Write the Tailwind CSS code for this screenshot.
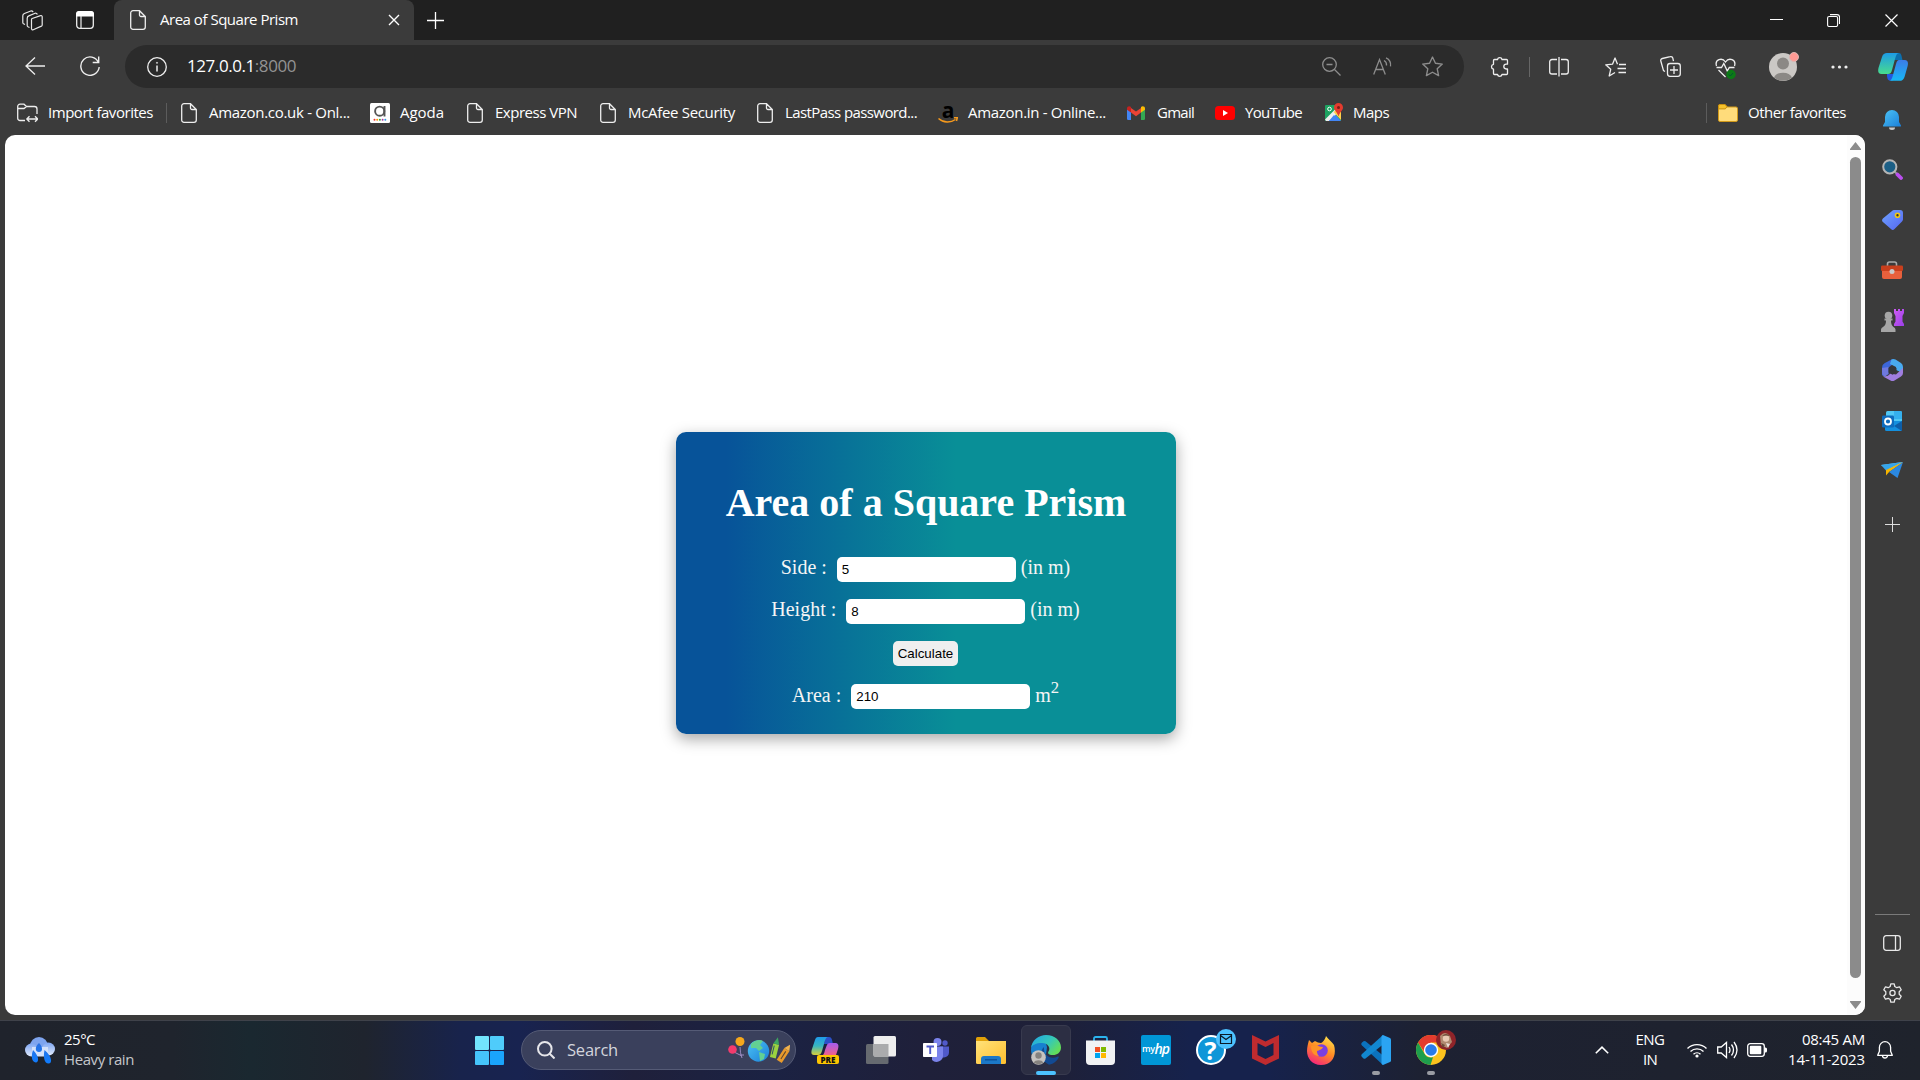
<!DOCTYPE html>
<html lang="en">
<head>
<meta charset="utf-8">
<title>Area of Square Prism</title>
<script src="https://cdn.jsdelivr.net/npm/@tailwindcss/browser@4"></script>
</head>
<body class="relative w-[1920px] h-[1080px] overflow-hidden flex flex-col bg-[#3b3b3b] text-white text-[15px] leading-5 font-['Open_Sans','Noto_Sans',sans-serif]">
<svg class="absolute w-0 h-0">
  <defs>
    <symbol id="doc" viewBox="0 0 16 20"><path d="M3 .7h6.500L15.300 6.500V17a2.300 2.300 0 0 1-2.300 2.300H3A2.300 2.300 0 0 1 .7 17V3A2.300 2.300 0 0 1 3 .7zM9.500 .9V5a1.500 1.500 0 0 0 1.500 1.500h4.100" fill="none" stroke="#eee" stroke-width="1.300"/></symbol>
    <linearGradient id="gBlue" x1="0" y1="0" x2="1" y2="1"><stop stop-color="#4cc3f5"/><stop offset="1" stop-color="#1b7fd8"/></linearGradient>
    <linearGradient id="gTeal" x1="0" y1="0" x2="0" y2="1"><stop stop-color="#1d9be6"/><stop offset="1" stop-color="#48dc8e"/></linearGradient>
    <linearGradient id="gPre" x1="0" y1="0" x2="0" y2="1"><stop stop-color="#1f9bea"/><stop offset=".5" stop-color="#38b6c0"/><stop offset="1" stop-color="#d8cf3a"/></linearGradient>
    <linearGradient id="gPink" x1="0" y1="0" x2="0" y2="1"><stop stop-color="#a45cf0"/><stop offset="1" stop-color="#f0608a"/></linearGradient>
    <linearGradient id="gCyan" x1="0" y1="0" x2="0" y2="1"><stop stop-color="#3c7be8"/><stop offset="1" stop-color="#17b8f5"/></linearGradient>
    <linearGradient id="gPurple" x1="0" y1="0" x2="1" y2="1"><stop stop-color="#d05cf5"/><stop offset="1" stop-color="#9a3fe6"/></linearGradient>
    <linearGradient id="gTag" x1="0" y1="0" x2="1" y2="1"><stop stop-color="#6fa3ff"/><stop offset="1" stop-color="#5566f0"/></linearGradient>
    <linearGradient id="gWin" x1="0" y1="0" x2="1" y2="1"><stop stop-color="#7df0ff"/><stop offset="1" stop-color="#0a9bff"/></linearGradient>
    <linearGradient id="gCloud" x1="0" y1="0" x2="0" y2="1"><stop stop-color="#7ea6f2"/><stop offset="1" stop-color="#dfe9fb"/></linearGradient>
    <linearGradient id="gDrop" x1="0" y1="0" x2="0" y2="1"><stop stop-color="#2a6fe0"/><stop offset="1" stop-color="#0f7dff"/></linearGradient>
    <linearGradient id="gFold" x1="0" y1="0" x2="1" y2="1"><stop stop-color="#ffe27a"/><stop offset="1" stop-color="#ffbf2e"/></linearGradient>
    <linearGradient id="gEdge" x1="0" y1="0" x2="1" y2=".6"><stop stop-color="#1fa4e8"/><stop offset=".6" stop-color="#35c8b8"/><stop offset="1" stop-color="#62dd5a"/></linearGradient>
    <linearGradient id="gFox" x1=".8" y1="0" x2=".3" y2="1"><stop stop-color="#ffe24a"/><stop offset=".5" stop-color="#ff8a24"/><stop offset="1" stop-color="#f5247c"/></linearGradient>
  </defs>
</svg>

<!-- Tab strip -->
<header class="h-10 shrink-0 flex items-center bg-[#202020]">
  <div class="w-[114px] h-10 flex items-center pl-[22px] gap-[33px]">
    <svg class="w-[21px] h-[21px]" viewBox="0 0 21 21" fill="none" stroke="#e8e8e8" stroke-width="1.200" stroke-linejoin="round"><path d="M9.500 9.500Q9.500 8.800 10.200 8.500L18.500 5.600a1.200 1.200 0 0 1 1.700 1.100v8.200q0 .8-.8 1.200L11.200 19.700a1.200 1.200 0 0 1-1.700-1z"/><path d="M7.500 17.500 6 16.800Q5.200 16.400 5.200 15.500V8.200a2.500 2.500 0 0 1 1.600-2.300l6.300-2.600a1.700 1.700 0 0 1 2.200 1.200M3 14.500 1.500 13.800Q.8 13.300 .8 12.500V5.800a2.500 2.500 0 0 1 1.600-2.300L8.800 1a1.700 1.700 0 0 1 2.200 1.200"/></svg>
    <svg class="w-[18px] h-[18px]" viewBox="0 0 18 18"><rect x=".7" y=".7" width="16.600" height="16.600" rx="3" fill="none" stroke="#eee" stroke-width="1.300"/><path d="M3 0h12a3 3 0 0 1 3 3v2.500H0V3a3 3 0 0 1 3-3z" fill="#fff"/><path d="M5 5v12" stroke="#eee" stroke-width="1.200"/></svg>
  </div>
  <div class="w-[300px] h-10 flex items-center bg-[#3b3b3b] rounded-t-lg pl-4 pr-[14px]">
    <svg class="w-4 h-5"><use href="#doc"/></svg>
    <span class="ml-[14px] pb-0.5 whitespace-nowrap" data-w="138">Area of Square Prism</span>
    <svg class="ml-auto w-3 h-3" viewBox="0 0 12 12" stroke="#fff" stroke-width="1.400"><path d="m1 1 10 10M11 1 1 11"/></svg>
  </div>
  <svg class="ml-[13px] w-[17px] h-[17px]" viewBox="0 0 17 17" stroke="#fff" stroke-width="1.300"><path d="M8.500 0v17M0 8.500h17"/></svg>
  <div class="ml-auto flex items-center">
    <div class="w-[57px] flex justify-center"><svg class="w-[13px] h-[13px]" viewBox="0 0 13 13"><path d="M0 5.500h13" stroke="#fff"/></svg></div>
    <div class="w-[57px] flex justify-center"><svg class="w-[13px] h-[13px]" viewBox="0 0 13 13" fill="none" stroke="#fff" stroke-width="1.100"><rect x=".6" y="2.500" width="10" height="10" rx="1.500"/><path d="M3 .6h7a2.500 2.500 0 0 1 2.500 2.500V10"/></svg></div>
    <div class="w-[58px] flex justify-center"><svg class="w-[13px] h-[13px]" viewBox="0 0 13 13" stroke="#fff" stroke-width="1.200"><path d="m.5.5 12 12M12.500.5l-12 12"/></svg></div>
  </div>
</header>

<!-- Toolbar -->
<nav class="h-12 pt-[5px] shrink-0 flex items-center">
  <svg class="ml-[25px] w-5 h-5 mb-px" viewBox="0 0 20 20" fill="none" stroke="#eee" stroke-width="1.300"><path d="M20 10H1M10 1.500 1 10l9 8.500"/></svg>
  <svg class="ml-[35px] w-5 h-5 mb-px" viewBox="0 0 20 20" fill="none" stroke="#eee" stroke-width="1.400"><path d="M18.500 6.500A9.200 9.200 0 1 0 19.200 11M18.700 .5v6h-6"/></svg>
  <div class="ml-[25px] w-[1339px] h-[43px] rounded-full bg-[#2b2b2b] flex items-center pl-[22px] pr-[21px]">
    <svg class="w-5 h-5" viewBox="0 0 20 20" fill="none" stroke="#eee" stroke-width="1.300"><circle cx="10" cy="10" r="9.300"/><path d="M10 8.500v6" stroke-width="1.500"/><circle cx="10" cy="5.800" r=".6" fill="#eee" stroke-width=".6"/></svg>
    <span class="ml-5 pb-0.5 text-[17px] whitespace-nowrap" data-w="109">127.0.0.1<span class="text-[#939393]">:8000</span></span>
    <div class="ml-auto flex items-center text-[#8d8d8d]" >
      <svg class="w-[19px] h-[19px]" viewBox="0 0 19 19" fill="none" stroke="currentColor" stroke-width="1.300"><circle cx="7.500" cy="7.500" r="6.800"/><path d="M4.500 7.500h6M12.500 12.500l6 6"/></svg>
      <svg class="ml-8 w-5 h-[19px]" viewBox="0 0 20 19" fill="none" stroke="currentColor" stroke-width="1.300"><path d="M.7 17.500 6.500 2.500l5.800 15M2.800 12.500h7.500M11 3.500a5 5 0 0 1 2.500 5M13 .8a8 8 0 0 1 4.500 8.500" /></svg>
      <svg class="ml-[29px] w-[21px] h-[21px]" viewBox="0 0 20 20" fill="none" stroke="currentColor" stroke-width="1.300" stroke-linejoin="round"><path d="m10 1 2.800 5.900 6.500.8-4.800 4.500 1.300 6.500-5.800-3.200-5.800 3.200 1.300-6.500L.7 7.700l6.500-.8z"/></svg>
    </div>
  </div>
  <div class="ml-[26px] flex items-center">
    <svg class="w-5 h-5" viewBox="0 0 20 20" fill="none" stroke="#eee" stroke-width="1.300" stroke-linejoin="round"><path d="M4.500 2.500h3a2.300 2.300 0 0 1 4.500 0h4.500a1 1 0 0 1 1 1v3.700h-1.300a2.400 2.400 0 0 0 0 4.800h1.300v4.500a1 1 0 0 1-1 1H12a2.300 2.300 0 0 1-4.500 0h-3a1 1 0 0 1-1-1V12.200a2.500 2.500 0 0 1 0-4.900V3.500a1 1 0 0 1 1-1z"/></svg>
    <div class="ml-[19px] w-px h-5 bg-[#666]"></div>
    <svg class="ml-[19px] w-5 h-5" viewBox="0 0 20 20" fill="none" stroke="#eee" stroke-width="1.300"><path d="M8 2.500H3A2.300 2.300 0 0 0 .7 4.800v9.900A2.300 2.300 0 0 0 3 17h5M12 2.500h5a2.300 2.300 0 0 1 2.300 2.300v9.900A2.300 2.300 0 0 1 17 17h-5M10 0v19.500"/></svg>
    <svg class="ml-9 w-[21px] h-5" viewBox="0 0 21 20" fill="none" stroke="#eee" stroke-width="1.300" stroke-linejoin="round"><path d="M12.500 7.300 10 1 7.500 7.200l-6.800.6 5 4.500-1.500 6.700 5.800-3.500M14 7.500h7M12.500 11.500H21M13.500 15.500H21"/></svg>
    <svg class="ml-[34px] w-[21px] h-[21px]" viewBox="0 0 21 21" fill="none" stroke="#eee" stroke-width="1.300"><rect x="7.500" y="7.500" width="12.800" height="12.800" rx="2.500"/><path d="M14 10v8M10 14h8M5 15.500 3.500 14.600 .8 5a2 2 0 0 1 1.500-2.500l8-1.800a2 2 0 0 1 2.500 1.500l.7 3"/></svg>
    <svg class="ml-[34px] w-[22px] h-[22px] mt-1" viewBox="0 0 22 22" fill="none" stroke="#eee" stroke-width="1.300"><path d="M1.500 8C-.5 1.500 7-1 10.500 4 14-1 21.500 1.500 19.500 8M1.500 9.500h5l2.300-4 3.500 7.500 2-3.500h5.200M3.500 12l7 7"/><circle cx="16" cy="16.500" r="4.700" fill="#0c7a16" stroke="none"/><path d="m13.800 16.500 1.500 1.500 2.700-3" stroke="#053" stroke-width="1"/></svg>
    <div class="relative ml-8 w-7 h-7 rounded-full bg-[#cbc8c5]">
      <svg class="w-7 h-7" viewBox="0 0 28 28"><circle cx="14" cy="10.500" r="6" fill="#8b8885"/><path d="M5 24.500a9.500 7 0 0 1 18 0 14 14 0 0 1-18 0z" fill="#8b8885"/></svg>
      <span class="absolute -top-[1px] right-[-2px] w-[10px] h-[10px] rounded-full bg-[#ff9a94] border border-[#d9b6b3]"></span>
    </div>
    <svg class="ml-[34px] w-[17px] h-1" viewBox="0 0 17 4" fill="#eee"><circle cx="2" cy="2" r="1.600"/><circle cx="8.500" cy="2" r="1.600"/><circle cx="15" cy="2" r="1.600"/></svg>
    <svg class="ml-[30px] w-[30px] h-7" viewBox="0 0 30 28"><path d="M9 21h9l-3 6.500h-3C9.500 27.500 9 25 9 21z" fill="#2358e0"/><path d="M17 0h4c2.500 0 2.500 3 3.500 7h-8z" fill="#0c6fae"/><path d="M9 0h12c-2 0-3 2-4 6l-3 11c-.8 3-2 4-4 4H3.500C0 21-.3 18 .6 14.500L4 4c1-3 2.500-4 5-4z" fill="url(#gTeal)"/><path d="M21 7h5.500c3.500 0 4 2.500 3 6.500L26.500 24c-1 3-2.500 3.800-5 3.800H11c2 0 2.800-1.500 3.800-5L18 11c1-3 1.500-4 3-4z" fill="url(#gCyan)"/></svg>
  </div>
</nav>

<div class="flex h-[932px] shrink-0">
  <div class="w-[1865px] flex flex-col">
    <!-- Favourites bar -->
    <div class="h-[47px] pt-[2px] flex items-center whitespace-nowrap">
      <div class="w-[149px] ml-[17px] flex items-center gap-[10px]">
        <svg class="w-[21px] h-5 shrink-0" viewBox="0 0 21 20" fill="none" stroke="#eee" stroke-width="1.300"><path d="M8 17.500H3A2.300 2.300 0 0 1 .7 15.200V3.500A2.300 2.300 0 0 1 3 1.200h4l2.500 2.300h8A2.500 2.500 0 0 1 20 6v5M.7 5.500H7l2.500-2M10 16h10.500M12.500 13.200 9.800 16l2.700 2.800M18 13.200l2.700 2.800-2.700 2.800"/></svg>
        <span class="pb-0.5" data-w="105">Import favorites</span>
      </div>
      <div class="w-px h-5 bg-[#5c5c5c]"></div>
      <div class="w-[189px] ml-[14px] flex items-center gap-3"><svg class="w-4 h-5 shrink-0"><use href="#doc"/></svg><span class="pb-0.5" data-w="141">Amazon.co.uk - Onl...</span></div>
      <div class="w-[97px] flex items-center gap-[10px]">
        <svg class="w-5 h-5" viewBox="0 0 20 20"><rect width="20" height="20" rx="1.500" fill="#fff"/><circle cx="9.700" cy="8.200" r="4.600" fill="none" stroke="#555" stroke-width="1.900"/><path d="M14.500 3v10.500" stroke="#555" stroke-width="1.900"/><circle cx="4.500" cy="16.700" r="1" fill="#e33"/><circle cx="7.200" cy="16.700" r="1" fill="#f90"/><circle cx="9.900" cy="16.700" r="1" fill="#3a3"/><circle cx="12.600" cy="16.700" r="1" fill="#a3a"/><circle cx="15.300" cy="16.700" r="1" fill="#39d"/></svg>
        <span class="pb-0.5" data-w="44">Agoda</span></div>
      <div class="w-[133px] flex items-center gap-3"><svg class="w-4 h-5 shrink-0"><use href="#doc"/></svg><span class="pb-0.5" data-w="82">Express VPN</span></div>
      <div class="w-[157px] flex items-center gap-3"><svg class="w-4 h-5 shrink-0"><use href="#doc"/></svg><span class="pb-0.5" data-w="107">McAfee Security</span></div>
      <div class="w-[181px] flex items-center gap-3"><svg class="w-4 h-5 shrink-0"><use href="#doc"/></svg><span class="pb-0.5" data-w="132">LastPass password...</span></div>
      <div class="w-[189px] flex items-center gap-[10px]">
        <span class="relative w-5 h-5 shrink-0 flex justify-center text-black font-bold text-[21px] leading-[14px] font-['Open_Sans']">a<svg class="absolute left-0 bottom-0 w-5 h-[6px]" viewBox="0 0 20 6" fill="none" stroke="#f79a1c" stroke-width="1.500"><path d="M.5 1.500c5 4.500 12 4.500 17 1M16 .8h3.300L18.500 4"/></svg></span>
        <span class="pb-0.5" data-w="138">Amazon.in - Online...</span></div>
      <div class="w-[88px] flex items-center gap-3">
        <svg class="w-[18px] h-[14px]" viewBox="0 0 18 14"><path d="M0 2.500 4 5v9H1.200A1.200 1.200 0 0 1 0 12.800z" fill="#4285f4"/><path d="M18 2.500 14 5v9h2.800a1.200 1.200 0 0 0 1.200-1.200z" fill="#34a853"/><path d="M4 2v4.500l5 3.700 5-3.700V2L9 5.600z" fill="#ea4335"/><path d="M0 2.500C0 .5 2.200-.5 4 .9v5.600L0 3.700z" fill="#c5221f"/><path d="M18 2.500C18 .5 15.800-.5 14 .9v5.600l4-2.800z" fill="#fbbc04"/></svg>
        <span class="pb-0.5" data-w="37">Gmail</span></div>
      <div class="w-[110px] flex items-center gap-[10px]">
        <svg class="w-5 h-[14px]" viewBox="0 0 20 14"><rect width="20" height="14" rx="3.500" fill="#f00"/><path d="m8 4 5 3-5 3z" fill="#fff"/></svg>
        <span class="pb-0.5" data-w="57">YouTube</span></div>
      <div class="w-[80px] flex items-center gap-[10px]">
        <svg class="w-[18px] h-[19px] shrink-0" viewBox="0 0 18 19"><rect y="2" width="16" height="16" rx="1" fill="#1da261"/><path d="m1 18 8-8 7 8z" fill="#4285f4"/><path d="m0 16.500 10-10 3 3-9 8.500H1z" fill="#eee"/><path d="m8.500 9 7.500 8V9l-3-3z" fill="#ffd04b"/><path d="M4 18 9 12l5 6z" fill="#4285f4"/><circle cx="4.500" cy="6" r="1.800" fill="none" stroke="#fff"/><path d="M13.500 0A4.500 4.500 0 0 1 18 4.500c0 3-3 4-4.500 9-1.500-5-4.500-6-4.500-9A4.500 4.500 0 0 1 13.500 0z" fill="#e33b2e"/><circle cx="13.500" cy="4.500" r="1.500" fill="#7b1d16"/></svg>
        <span class="pb-0.5" data-w="36">Maps</span></div>
      <div class="ml-auto flex items-center w-[159px]">
        <div class="w-px h-5 bg-[#5c5c5c]"></div>
        <svg class="ml-[11px] w-5 h-[18px]" viewBox="0 0 20 18"><path d="M.5 2A1.500 1.500 0 0 1 2 .5h5L9 3h9a1.500 1.500 0 0 1 1.500 1.500v11.500A1.500 1.500 0 0 1 18 17.500H2A1.500 1.500 0 0 1 .5 16z" fill="#ffdc7b" stroke="#d29a1a"/><path d="M.5 2A1.500 1.500 0 0 1 2 .5h5L9 2.700 7.300 4.900H.5z" fill="#f5c22c" stroke="#c98f0f"/></svg>
        <span class="ml-[10px] pb-0.5" data-w="98">Other favorites</span>
      </div>
    </div>

    <!-- Page viewport -->
    <main class="ml-[5px] h-[880px] bg-white rounded-[10px] flex overflow-hidden">
      <div class="w-[1842px] flex justify-center pt-[297px]">
        <form class="w-[500px] h-[302px] rounded-[10px] bg-[linear-gradient(90deg,#075399_10%,#098f97_56%)] shadow-[0_5px_15px_rgba(0,0,0,0.35)] flex flex-col items-center pt-[48px] text-[20px] leading-[25px] text-[whitesmoke] font-['Liberation_Serif',serif]">
          <h1 class="h-[77px] text-[40px] leading-[46px] font-bold text-white whitespace-nowrap">Area of a Square Prism</h1>
          <div class="flex h-[25px] mb-[17px] mr-px"><label class="mr-[10px] -mt-[2px]">Side :</label><input class="w-[179px] h-[25px] px-[5px] rounded-[5px] bg-white text-black text-[13.333px] font-['Liberation_Sans',sans-serif]" value="5"><span class="ml-[5px] -mt-[2px]">(in m)</span></div>
          <div class="flex h-[25px] mb-[17px] mr-px"><label class="mr-[10px] -mt-[2px]">Height :</label><input class="w-[179px] h-[25px] px-[5px] rounded-[5px] bg-white text-black text-[13.333px] font-['Liberation_Sans',sans-serif]" value="8"><span class="ml-[5px] -mt-[2px]">(in m)</span></div>
          <button type="button" class="w-[65px] h-[25px] mb-[18px] mr-px rounded-[5px] bg-[#efefef] text-black text-[13.333px] leading-[25px] font-['Liberation_Sans',sans-serif]">Calculate</button>
          <div class="flex h-[25px] mr-px"><label class="mr-[10px] -mt-px">Area :</label><input class="w-[179px] h-[25px] px-[5px] rounded-[5px] bg-white text-black text-[13.333px] font-['Liberation_Sans',sans-serif]" value="210"><span class="ml-[5px] -mt-px">m</span><span class="-mt-[9px] text-[16.667px]">2</span></div>
        </form>
      </div>
      <div class="w-[16px] bg-[#fcfcfc] flex flex-col items-center pt-[7px]">
        <svg class="w-[11px] h-2" viewBox="0 0 11 8"><path d="M5.500 0 11 7a.6.6 0 0 1-.5 1H.5A.6.6 0 0 1 0 7z" fill="#8b8b8b"/></svg>
        <div class="mt-[7px] w-[11px] h-[821px] rounded-full bg-[#8b8b8b]"></div>
        <svg class="mt-[23px] w-[11px] h-2" viewBox="0 0 11 8"><path d="M5.500 8 11 1a.6.6 0 0 0-.5-1H.5A.6.6 0 0 0 0 1z" fill="#8b8b8b"/></svg>
      </div>
      <div class="w-[2px] bg-[#fcfcfc]"></div>
    </main>
  </div>

  <!-- Sidebar -->
  <aside class="w-[54px] pt-[7px] flex flex-col items-center">
    <div class="h-[50px] flex items-center"><svg class="w-[18px] h-5" viewBox="0 0 18 20"><path d="M6 17.500h6a3 2.500 0 0 1-6 0z" fill="#c9c9c9"/><path d="M9 0a7 7 0 0 1 7 7v5l2 3.500a.7.7 0 0 1-.6 1H.6a.7.7 0 0 1-.6-1L2 12V7a7 7 0 0 1 7-7z" fill="url(#gBlue)"/></svg></div>
    <div class="h-[50px] flex items-center pb-0.5"><svg class="w-[21px] h-[21px]" viewBox="0 0 21 21"><path d="m12 12 3.500 3.500" stroke="#999" stroke-width="2"/><path d="m15.500 15.500 3.500 3.500" stroke="#bb4ff0" stroke-width="3.800" stroke-linecap="round"/><circle cx="7.800" cy="7.800" r="6.600" fill="#1c5f86" stroke="#b5b5b5" stroke-width="2"/></svg></div>
    <div class="h-[50px] flex items-center"><svg class="w-[21px] h-5" viewBox="0 0 21 20"><path d="M12.500 0H18a3 3 0 0 1 3 3v6.500a3 3 0 0 1-1 2l-7.500 7.600a2.500 2.500 0 0 1-3.500 0L.9 12a2.500 2.500 0 0 1 0-3.500L10 .9A3.500 3.500 0 0 1 12.500 0z" fill="url(#gTag)"/><circle cx="15.500" cy="5.300" r="2" fill="#333" stroke="#f2c811" stroke-width="1.600"/></svg></div>
    <div class="h-[50px] flex items-center"><svg class="w-[22px] h-[18px]" viewBox="0 0 22 18"><path d="M6.500 5V3A2 2 0 0 1 8.500 1h5a2 2 0 0 1 2 2v2" fill="none" stroke="#aaa" stroke-width="1.600"/><path d="M1 8h20v8a2 2 0 0 1-2 2H3a2 2 0 0 1-2-2z" fill="#e8603c"/><rect y="4.500" width="22" height="5.500" rx="1.200" fill="#c93f1d"/><circle cx="11" cy="10.500" r="2.500" fill="#c9c9c9"/></svg></div>
    <div class="h-[50px] flex items-center"><svg class="w-[23px] h-[23px]" viewBox="0 0 23 23"><path d="M13 0h2v2h2V0h2v2h2V0h2v4l-1.500 3v5.500L23 15v2H13v-2l1.500-2.500V7L13 4z" fill="url(#gPurple)"/><circle cx="7.500" cy="6.500" r="3.800" fill="#a6a6a6"/><path d="M3.500 9.500h8v2H10c0 3 .5 5 2.500 6.500a3 3 0 0 1 2 2.500V23H0v-2.500a3 3 0 0 1 2-2.500c2.500-1.500 3-3.500 3-6.500H3.500z" fill="#a6a6a6"/></svg></div>
    <div class="h-[50px] flex items-center"><svg class="w-[21px] h-[22px]" viewBox="0 0 21 22"><path d="M10.500 0 2.500 4.300Q0 5.800 0 8.500v8l6.500-1V8.500L13 3.500z" fill="#3c66d8"/><path d="M9.500 .5q2-1 4 0L19 4q2 1.500 2 4v6L14 11V8L8 5z" fill="#49aaf0"/><path d="m21 9v5q0 2.300-2 3.500l-6.500 4q-2 1-4 0L1 17.500q6 0 7-3l6 1z" fill="#a07ee0"/><path d="M6.500 8v6.500L3 18q-3-1.500-3-5V9z" fill="#6f78e0"/><path d="M10.500 6.500 14.500 9v4.500l-4 2.300-4-2.300V9z" fill="#35363b"/></svg></div>
    <div class="h-[50px] flex items-center pt-0.5"><svg class="w-5 h-5" viewBox="0 0 20 20"><rect x="4" width="16" height="15" rx="1.500" fill="#50c8f5"/><path d="M12 0h6.500A1.500 1.500 0 0 1 20 1.500V8h-8z" fill="#35b0ee"/><path d="M3 10h17v8.500a1.500 1.500 0 0 1-1.500 1.500h-14A1.500 1.500 0 0 1 3 18.500z" fill="#1490df"/><path d="m20 10-8 5 8 5z" fill="#0e5ea8"/><rect y="4.500" width="12" height="12" rx="1.200" fill="#0f6cbd"/><circle cx="6" cy="10.500" r="3" fill="none" stroke="#fff" stroke-width="1.800"/></svg></div>
    <div class="h-[50px] flex items-center"><svg class="w-[22px] h-[16px]" viewBox="0 0 22 16"><path d="M0 3 22 0 9 9z" fill="#6fc8f7"/><path d="M0 3 21.500 0 5 8.500z" fill="#36a5ea"/><path d="M22 0 16.500 16 8 10z" fill="#2b88e0"/><path d="M22 0 5 8v5.500l3.500-4z" fill="#f7b500"/></svg></div>
    <div class="h-[58px] flex items-center"><svg class="w-[15px] h-[15px]" viewBox="0 0 15 15" stroke="#ddd"><path d="M7.500 0v15M0 7.500h15"/></svg></div>
    <div class="mt-auto w-[35px] h-px bg-[#7a7a7a]"></div>
    <svg class="mt-5 w-[18px] h-4" viewBox="0 0 18 16" fill="none" stroke="#e8e8e8" stroke-width="1.300"><rect x=".7" y=".7" width="16.600" height="14.600" rx="2.500"/><path d="M12.500 1v14"/></svg>
    <svg class="mt-8 mb-4 w-[21px] h-[21px]" viewBox="0 0 21 21" fill="none" stroke="#e8e8e8" stroke-width="1.300" stroke-linejoin="round"><path d="M8.800.8h3.400l.6 2.700 2 1.200 2.700-.9 1.700 3-2 1.900v2.600l2 1.900-1.700 3-2.700-.9-2 1.200-.6 2.700H8.800l-.6-2.700-2-1.200-2.700.9-1.700-3 2-1.900V8.700l-2-1.900 1.700-3 2.700.9 2-1.200z"/><circle cx="10.500" cy="10" r="2.600"/></svg>
  </aside>
</div>
<div class="h-px shrink-0 bg-[#3f424a]"></div>

<!-- Taskbar -->
<footer class="h-[59px] pb-px shrink-0 flex items-center bg-[linear-gradient(90deg,#1f232c_0%,#1f242d_9%,#1a2830_13%,#1f242e_19%,#18234c_24%,#182350_27%,#1f203b_33%,#1b2243_40%,#1f203a_48%,#1e2038_55%,#16224c_62%,#16224c_66%,#1d2132_74%,#1f232c_100%)]">
  <svg class="ml-[25px] w-[30px] h-[27px] shrink-0" viewBox="0 0 30 27"><circle cx="14" cy="9" r="9" fill="#7ea4ee"/><circle cx="6.500" cy="13" r="6.500" fill="url(#gCloud)"/><circle cx="23.500" cy="12" r="6.500" fill="url(#gCloud)"/><path d="M7 10h16v9.500H7z" fill="#d4e1fa"/><path d="M14 6c4 4 4 9 0 9s-4.500-5 0-9zM8 13c7 7 5.500 12.500 3 12.500S5 22 8 13zM19.500 13c8 7 8 13.500 4 13.500s-5.500-6-4-13.500z" fill="url(#gDrop)"/></svg>
  <div class="ml-[9px] w-[411px] pb-[3px] flex flex-col items-start whitespace-nowrap"><span data-w="31">25°C</span><span class="text-[#c4c6ca]" data-w="70">Heavy rain</span></div>
  <svg class="w-[29px] h-[29px]" viewBox="0 0 29 29"><rect width="14" height="14" rx="1" fill="#72e4fd"/><rect x="15" width="14" height="14" rx="1" fill="#4fccfb"/><rect y="15" width="14" height="14" rx="1" fill="#45c4fb"/><rect x="15" y="15" width="14" height="14" rx="1" fill="#1aa4fc"/></svg>
  <div class="ml-[17px] w-[275px] h-10 rounded-full bg-[#3a405c] border border-[#555b76] flex items-center pl-[15px] pr-[5px]">
    <svg class="w-[18px] h-[18px]" viewBox="0 0 18 18" fill="none" stroke="#e6e6ea" stroke-width="2"><circle cx="7.800" cy="7.800" r="6.800"/><path d="m12.500 12.500 5 5"/></svg>
    <span class="ml-3 text-[16.500px] text-[#d3d5dc]" data-w="51">Search</span>
    <svg class="ml-auto w-[62px] h-[27px]" viewBox="0 0 62 27"><path d="M6 15q4 2 8 4M12 10q0 6 2 11M12 18l4 0" stroke="#9b8ac0" fill="none"/><circle cx="12" cy="4.500" r="4.500" fill="#f5a81c"/><circle cx="4.500" cy="12.500" r="4.300" fill="#f33b6d"/><circle cx="30.500" cy="14" r="10.700" fill="url(#gBlue)"/><path d="M23 7c4-4 9-5 12-3l-3 4 3 3-4 3-3-3-5 0zM31 15l6 2-1 5-4 2z" fill="#63d093"/><g transform="rotate(14 47 12)"><rect x="44" y="7" width="6" height="14" fill="#9bd340"/><path d="m44 7 3-7 3 7z" fill="#3da660"/><path d="M45.500 9v9" stroke="#31506a"/></g><g transform="rotate(33 56 18)"><rect x="52.500" y="12" width="6" height="14" fill="#e89a2c"/><path d="m52.500 12 3-6 3 6z" fill="#f2b34e"/><path d="M55.500 14v9" stroke="#5a452e"/></g></svg>
  </div>
  <div class="flex h-[59px] items-center ml-[2px]">
    <div class="w-[55px] flex justify-center"><svg class="w-[29px] h-[29px]" viewBox="0 0 29 29"><path d="M14 1h4c3 0 3 3 4 7h-9z" fill="#2b50c8"/><path d="M7 1h10c-2 0-3 3-4 7l-2 7c-1 3-2 4-4 4H3c-3 0-3-3-2-6L4 4c.6-2 1.500-3 3-3z" fill="url(#gPre)"/><path d="M19 7h5c3.500 0 4 2.500 3 6l-2 6H12c1-1 1.500-3 2-5l1.500-4c.8-2 1.500-3 3.500-3z" fill="url(#gPink)"/><rect x="6" y="19" width="22" height="9" rx="2" fill="#fdc500"/><text x="17" y="26.500" text-anchor="middle" font-size="8" font-weight="800" font-family="Open Sans" fill="#111">PRE</text></svg></div>
    <div class="w-[55px] flex justify-center"><svg class="w-[30px] h-[28px]" viewBox="0 0 30 28"><rect y="8" width="22.500" height="20" rx="1.500" fill="#666a70"/><rect x="7.500" width="22.500" height="20.500" rx="1.500" fill="#eee"/><path d="M7.500 8h15v12.500H9a1.500 1.500 0 0 1-1.500-1.500z" fill="#aaabad"/></svg></div>
    <div class="w-[55px] flex justify-center"><svg class="w-[26px] h-6" viewBox="0 0 26 24"><circle cx="22" cy="5" r="2.700" fill="#5059c9"/><circle cx="14.500" cy="4" r="4" fill="#7b83eb"/><path d="M17 8.500h9v6a5 5 0 0 1-5 5h-4z" fill="#5059c9"/><path d="M9 8.500h11V17a6.500 6.500 0 0 1-11 5z" fill="#7b83eb"/><rect y="5" width="14" height="14" rx=".8" fill="#fff"/><path d="M3.500 8.500h7.500M7.200 8.500V16" stroke="#5059c9" stroke-width="1.900"/></svg></div>
    <div class="w-[55px] flex justify-center"><svg class="w-[30px] h-[27px]" viewBox="0 0 30 27"><path d="M0 1.500A1.500 1.500 0 0 1 1.500 0H9l4 4v5H0z" fill="#e0a008"/><path d="M0 4h30v21.500a1.500 1.500 0 0 1-1.500 1.500h-27A1.500 1.500 0 0 1 0 25.500z" fill="url(#gFold)"/><path d="M5 27v-5a3 3 0 0 1 3-3h14a3 3 0 0 1 3 3v5z" fill="#1c78c8"/><path d="M9 22.800h12" stroke="#0b4f96" stroke-width="1.300"/></svg></div>
    <div class="relative w-[55px] h-[59px] flex items-center justify-center">
      <div class="w-[50px] h-[50px] rounded-md bg-[#2c2e43] border border-[#383a4e] flex items-center justify-center">
      <svg class="w-[30px] h-[30px]" viewBox="0 0 30 30"><path d="M0 15C0 6 7 2 14 5l2 7-2 15C6 28 0 22 0 15z" fill="#1780cf"/><path d="M0 13C1 5 8 0 15 0c9 0 15 6 15 12.500 0 5-4 7.500-8 7.500-5 0-5.500-2-4.500-3.500C20 13 17 8 11 8 5 8 1 10 0 13z" fill="url(#gEdge)"/><path d="M13 12C8 16 10 26 18 29.700c5-.7 8-4 9.700-7.200.3-1-.3-1.300-1-1-7 3.500-14.500-1-13.700-9.500z" fill="#124a92"/><circle cx="7.500" cy="22.500" r="7.300" fill="#c6c3c0"/><circle cx="7.500" cy="20.500" r="3.200" fill="#85827f"/><path d="M2.500 27.500a5.500 4 0 0 1 10 0q-5 3.500-10 0z" fill="#85827f"/></svg></div>
      <span class="absolute bottom-[5px] w-5 h-1 rounded-full bg-[#4cc2ff]"></span>
    </div>
    <div class="w-[55px] flex justify-center"><svg class="w-[29px] h-[29px]" viewBox="0 0 29 29"><path d="M8 6V2.500A1.500 1.500 0 0 1 9.500 1h10A1.500 1.500 0 0 1 21 2.500V6" fill="none" stroke="#2bb3ee" stroke-width="1.800"/><path d="M0 4.500h29V25a4 4 0 0 1-4 4H4a4 4 0 0 1-4-4z" fill="#f1f2f3"/><path d="M9 11h5v5H9z" fill="#f25022"/><path d="M15 11h5v5h-5z" fill="#7fba00"/><path d="M9 17h5v5H9z" fill="#00a4ef"/><path d="M15 17h5v5h-5z" fill="#ffb900"/></svg></div>
    <div class="w-[55px] flex justify-center"><div class="w-[30px] h-[30px] rounded-[2px] bg-[#0096d6] flex items-center justify-center pb-0.5 text-[9px] font-semibold tracking-[-0.5px]">my<i class="text-[14px] tracking-[-1px]">hp</i></div></div>
    <div class="relative w-[55px] flex justify-center"><div class="w-[30px] h-[30px] rounded-full bg-[#0f96d8] border-2 border-white flex items-center justify-center text-[25px] font-bold">?</div>
      <svg class="absolute -top-[6px] right-[2px] w-5 h-5" viewBox="0 0 20 20"><circle cx="10" cy="10" r="10" fill="#4cc2ff"/><path d="M4.500 5.500h11v9h-11zM4.500 6.500l5.500 4 5.500-4" fill="none" stroke="#0a1a28" stroke-width="1.200"/></svg></div>
    <div class="w-[55px] flex justify-center"><svg class="w-[27px] h-[30px]" viewBox="0 0 27 30"><path d="m0 0 13.500 6.500L27 0v23.500L13.500 30 0 23.500zM5.500 8v12l8 4 8-4V8l-8 4z" fill="#bf2b2f" fill-rule="evenodd"/></svg></div>
    <div class="w-[55px] flex justify-center"><svg class="w-[28px] h-[29px]" viewBox="0 0 28 29"><path d="M19 0c2 3 6 6 8 9 3 11-2 20-13 20C5 29 0 22 0 15c0-4 1-7 2-11l3 3 3-2q3 2 6 2c1 0 4-3 5-7z" fill="url(#gFox)"/><circle cx="14.500" cy="14.500" r="6.300" fill="#7a3fe0"/><path d="M4 10c5-2 7 1 12 1-1 3-4 3-6 4 0 3 1 4 2 5-5 0-8-4-8-10z" fill="#ff9326"/></svg></div>
    <div class="relative w-[55px] h-[59px] flex items-center justify-center"><svg class="w-[30px] h-[30px]" viewBox="0 0 30 30"><path d="m1 7.500 1.500-1.200q1-.5 2 0L22 20.500V30L1 10.500q-1.500-1.500 0-3z" fill="#0b72bd"/><path d="m1 22 1.500 1.500q1 .6 2 0L22 9.500V0L1 19q-1.500 1.500 0 3z" fill="#1287d0"/><path d="m22 0 7 3q1 .5 1 1.500v21q0 1-1 1.500l-7 3q-1.500-.5-1.500-2V2q0-1.500 1.500-2z" fill="#2ba4f2"/></svg><span class="absolute bottom-[5px] w-2 h-1 rounded-full bg-[#9a9ca3]"></span></div>
    <div class="relative w-[55px] h-[59px] flex items-center justify-center"><svg class="w-[30px] h-[30px]" viewBox="0 0 30 30"><circle cx="15" cy="15" r="15" fill="#fcc31e"/><path d="M2 7.500A15 15 0 0 1 28 7.500H15L9 18z" fill="#e33b2e"/><path d="M2 7.500 8.500 18.700A7.500 7.500 0 0 0 17 22.200L14.500 30A15 15 0 0 1 2 7.500z" fill="#1e9e4d"/><circle cx="15" cy="15" r="7.200" fill="#fff"/><circle cx="15" cy="15" r="5.800" fill="#2a7bea"/></svg>
      <svg class="absolute top-[9px] right-[2px] w-5 h-5" viewBox="0 0 20 20"><circle cx="10" cy="10" r="10" fill="#8f2429"/><path d="M4 6q5-6 10 0l2 6-5 6-6-3z" fill="#b08a70"/><circle cx="10" cy="8.500" r="3.200" fill="#e8c9b4"/><path d="M6 6q4-4 8 0l-4-.5zM5 13l4 2-2 3z" fill="#6b4a38"/><path d="M10 13l4 1-2 4z" fill="#eadfd8"/></svg>
      <span class="absolute bottom-[5px] w-2 h-1 rounded-full bg-[#9a9ca3]"></span></div>
  </div>
  <div class="ml-auto flex items-center">
    <svg class="w-[14px] h-2" viewBox="0 0 14 8" fill="none" stroke="#fff" stroke-width="1.600"><path d="M.8 7.300 7 1.200l6.200 6.100"/></svg>
    <div class="w-[82px] pb-[2px] flex flex-col items-center"><span data-w="29">ENG</span><span data-w="14">IN</span></div>
    <svg class="w-5 h-[15px] ml-[-4px]" viewBox="0 0 20 15" fill="none" stroke="#fff" stroke-width="1.400"><path d="M.5 5.500a13.500 13.500 0 0 1 19 0M3.500 8.500a9.300 9.300 0 0 1 13 0M6.500 11.300a5 5 0 0 1 7 0"/><circle cx="10" cy="13" r="1.600" fill="#fff" stroke="none"/></svg>
    <svg class="ml-[10px] w-[21px] h-[18px]" viewBox="0 0 21 18" fill="none" stroke="#fff" stroke-width="1.300"><path d="M.7 6h3.500L9.500 1.500v15L4.200 12H.7zM12 6q2 3 0 6M14.500 3.500q4 5.500 0 11M17 1q6 8 0 16"/></svg>
    <svg class="ml-[9px] w-5 h-[14px]" viewBox="0 0 20 14"><rect x=".7" y=".7" width="16.600" height="12.600" rx="2.500" fill="none" stroke="#fff" stroke-width="1.300"/><rect x="2.800" y="2.800" width="11.500" height="8.400" rx="1" fill="#fff"/><path d="M18 4.500h.5a1.500 1.500 0 0 1 1.500 1.500v2a1.500 1.500 0 0 1-1.500 1.500H18z" fill="#fff"/></svg>
    <div class="w-[98px] pb-[3px] flex flex-col items-end whitespace-nowrap"><span data-w="63">08:45 AM</span><span data-w="77">14-11-2023</span></div>
    <svg class="ml-3 mr-[27px] w-4 h-[18px]" viewBox="0 0 16 18" fill="none" stroke="#fff" stroke-width="1.300" stroke-linejoin="round"><path d="M8 .7A5.600 5.600 0 0 1 13.600 6.300v4l1.700 4H.7l1.700-4v-4A5.600 5.600 0 0 1 8 .7zM5.500 14.500a2.500 2.500 0 0 0 5 0"/></svg>
  </div>
</footer>
<script>
  // Tighten each label's tracking so that it fills its allotted width.
  function fitLabels() {
    document.querySelectorAll('[data-w]').forEach(el => {
      el.style.whiteSpace = 'nowrap';
      el.style.flexShrink = 0;
      el.style.letterSpacing = '0px';
      const gap = (el.dataset.w - el.getBoundingClientRect().width) / el.textContent.length;
      el.style.letterSpacing = gap + 'px';
    });
  }
  fitLabels();
  document.fonts.ready.then(fitLabels);
  window.addEventListener('load', fitLabels);
</script>
</body>
</html>
